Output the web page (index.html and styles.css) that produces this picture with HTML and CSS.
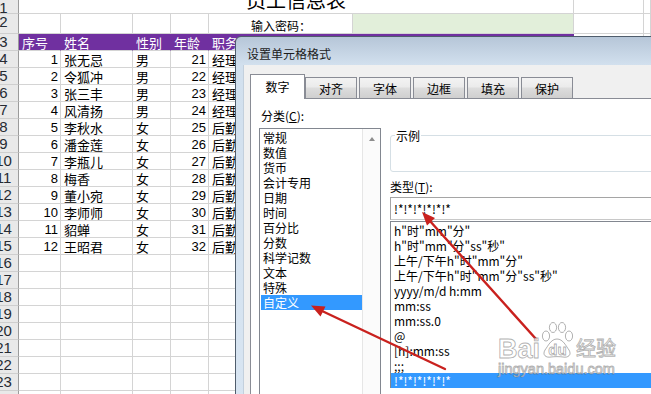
FILE: index.html
```html
<!DOCTYPE html>
<html lang="zh-CN">
<head>
  <meta charset="UTF-8" />
  <title>员工信息表 - 设置单元格格式</title>
  <link rel="stylesheet" href="styles.css">
</head>
<body>
  <div class="sheet">
    <div class="row r1">
      <div class="hd">1</div>
      <div class="cell title-cell"><span class="title">员工信息表</span></div>
      <div class="cell g"></div><div class="cell h"></div>
    </div>
    <div class="row r2">
      <div class="hd">2</div>
      <div class="cell a"></div><div class="cell b"></div><div class="cell c"></div><div class="cell d"></div>
      <div class="cell e pwd">输入密码：</div>
      <div class="cell f green"></div>
      <div class="cell g"></div><div class="cell h"></div>
    </div>
    <div class="row head">
      <div class="hd">3</div>
      <div class="cell a">序号</div><div class="cell b">姓名</div><div class="cell c">性别</div><div class="cell d">年龄</div>
      <div class="cell e">职务</div><div class="cell f"></div>
      <div class="cell g"></div><div class="cell h"></div>
    </div>
    <div class="row"><div class="hd">4</div><div class="cell a num">1</div><div class="cell b">张无忌</div><div class="cell c">男</div><div class="cell d num">21</div><div class="cell e">经理</div><div class="cell f"></div><div class="cell g"></div><div class="cell h"></div></div>
    <div class="row"><div class="hd">5</div><div class="cell a num">2</div><div class="cell b">令狐冲</div><div class="cell c">男</div><div class="cell d num">22</div><div class="cell e">经理</div><div class="cell f"></div><div class="cell g"></div><div class="cell h"></div></div>
    <div class="row"><div class="hd">6</div><div class="cell a num">3</div><div class="cell b">张三丰</div><div class="cell c">男</div><div class="cell d num">23</div><div class="cell e">经理</div><div class="cell f"></div><div class="cell g"></div><div class="cell h"></div></div>
    <div class="row"><div class="hd">7</div><div class="cell a num">4</div><div class="cell b">风清扬</div><div class="cell c">男</div><div class="cell d num">24</div><div class="cell e">经理</div><div class="cell f"></div><div class="cell g"></div><div class="cell h"></div></div>
    <div class="row"><div class="hd">8</div><div class="cell a num">5</div><div class="cell b">李秋水</div><div class="cell c">女</div><div class="cell d num">25</div><div class="cell e">后勤</div><div class="cell f"></div><div class="cell g"></div><div class="cell h"></div></div>
    <div class="row"><div class="hd">9</div><div class="cell a num">6</div><div class="cell b">潘金莲</div><div class="cell c">女</div><div class="cell d num">26</div><div class="cell e">后勤</div><div class="cell f"></div><div class="cell g"></div><div class="cell h"></div></div>
    <div class="row"><div class="hd">10</div><div class="cell a num">7</div><div class="cell b">李瓶儿</div><div class="cell c">女</div><div class="cell d num">27</div><div class="cell e">后勤</div><div class="cell f"></div><div class="cell g"></div><div class="cell h"></div></div>
    <div class="row"><div class="hd">11</div><div class="cell a num">8</div><div class="cell b">梅香</div><div class="cell c">女</div><div class="cell d num">28</div><div class="cell e">后勤</div><div class="cell f"></div><div class="cell g"></div><div class="cell h"></div></div>
    <div class="row"><div class="hd">12</div><div class="cell a num">9</div><div class="cell b">董小宛</div><div class="cell c">女</div><div class="cell d num">29</div><div class="cell e">后勤</div><div class="cell f"></div><div class="cell g"></div><div class="cell h"></div></div>
    <div class="row"><div class="hd">13</div><div class="cell a num">10</div><div class="cell b">李师师</div><div class="cell c">女</div><div class="cell d num">30</div><div class="cell e">后勤</div><div class="cell f"></div><div class="cell g"></div><div class="cell h"></div></div>
    <div class="row"><div class="hd">14</div><div class="cell a num">11</div><div class="cell b">貂蝉</div><div class="cell c">女</div><div class="cell d num">31</div><div class="cell e">后勤</div><div class="cell f"></div><div class="cell g"></div><div class="cell h"></div></div>
    <div class="row"><div class="hd">15</div><div class="cell a num">12</div><div class="cell b">王昭君</div><div class="cell c">女</div><div class="cell d num">32</div><div class="cell e">后勤</div><div class="cell f"></div><div class="cell g"></div><div class="cell h"></div></div>
    <div class="row"><div class="hd">16</div><div class="cell a"></div><div class="cell b"></div><div class="cell c"></div><div class="cell d"></div><div class="cell e"></div><div class="cell f"></div><div class="cell g"></div><div class="cell h"></div></div>
    <div class="row"><div class="hd">17</div><div class="cell a"></div><div class="cell b"></div><div class="cell c"></div><div class="cell d"></div><div class="cell e"></div><div class="cell f"></div><div class="cell g"></div><div class="cell h"></div></div>
    <div class="row"><div class="hd">18</div><div class="cell a"></div><div class="cell b"></div><div class="cell c"></div><div class="cell d"></div><div class="cell e"></div><div class="cell f"></div><div class="cell g"></div><div class="cell h"></div></div>
    <div class="row"><div class="hd">19</div><div class="cell a"></div><div class="cell b"></div><div class="cell c"></div><div class="cell d"></div><div class="cell e"></div><div class="cell f"></div><div class="cell g"></div><div class="cell h"></div></div>
    <div class="row"><div class="hd">20</div><div class="cell a"></div><div class="cell b"></div><div class="cell c"></div><div class="cell d"></div><div class="cell e"></div><div class="cell f"></div><div class="cell g"></div><div class="cell h"></div></div>
    <div class="row"><div class="hd">21</div><div class="cell a"></div><div class="cell b"></div><div class="cell c"></div><div class="cell d"></div><div class="cell e"></div><div class="cell f"></div><div class="cell g"></div><div class="cell h"></div></div>
    <div class="row"><div class="hd">22</div><div class="cell a"></div><div class="cell b"></div><div class="cell c"></div><div class="cell d"></div><div class="cell e"></div><div class="cell f"></div><div class="cell g"></div><div class="cell h"></div></div>
    <div class="row"><div class="hd">23</div><div class="cell a"></div><div class="cell b"></div><div class="cell c"></div><div class="cell d"></div><div class="cell e"></div><div class="cell f"></div><div class="cell g"></div><div class="cell h"></div></div>
    <div class="row"><div class="hd">24</div><div class="cell a"></div><div class="cell b"></div><div class="cell c"></div><div class="cell d"></div><div class="cell e"></div><div class="cell f"></div><div class="cell g"></div><div class="cell h"></div></div>
  </div>

  <div class="dialog">
    <div class="dlg-title">设置单元格格式</div>
    <div class="dlg-client">
      <div class="tabs">
        <div class="tab on">数字</div>
        <div class="tab">对齐</div>
        <div class="tab">字体</div>
        <div class="tab">边框</div>
        <div class="tab">填充</div>
        <div class="tab">保护</div>
      </div>
      <div class="panel">
        <div class="col-left">
          <div class="lbl">分类(<u>C</u>):</div>
          <div class="listbox">
            <ul class="items">
              <li>常规</li>
              <li>数值</li>
              <li>货币</li>
              <li>会计专用</li>
              <li>日期</li>
              <li>时间</li>
              <li>百分比</li>
              <li>分数</li>
              <li>科学记数</li>
              <li>文本</li>
              <li>特殊</li>
              <li class="sel">自定义</li>
            </ul>
            <div class="vscroll"><span class="up"></span></div>
          </div>
        </div>
        <div class="col-right">
          <div class="sample"><span class="legend">示例</span></div>
          <div class="lbl type-lbl">类型(<u>T</u>):</div>
          <div class="typein">!*!*!*!*!*!*</div>
          <ul class="typelist">
            <li>h"时"mm"分"</li>
            <li>h"时"mm"分"ss"秒"</li>
            <li>上午/下午h"时"mm"分"</li>
            <li>上午/下午h"时"mm"分"ss"秒"</li>
            <li>yyyy/m/d h:mm</li>
            <li>mm:ss</li>
            <li>mm:ss.0</li>
            <li>@</li>
            <li>[h]:mm:ss</li>
            <li>;;;</li>
            <li class="sel">!*!*!*!*!*!*</li>
          </ul>
        </div>
      </div>
    </div>
  </div>

  <svg class="marks" width="651" height="394" viewBox="0 0 651 394">
    <g stroke="#c9211e" stroke-width="2.4" stroke-linecap="round">
      <line x1="445" y1="369" x2="321" y2="310.5" />
      <line x1="536" y1="339" x2="429.5" y2="220.5" />
    </g>
    <g fill="#c9211e">
      <polygon points="311,305.5 325.5,306.5 320.5,316.5" />
      <polygon points="422,212 435,218 427,225.5" />
    </g>
  </svg>

  <div class="wm">
    <div class="wm-top">
      <span class="wm-bai">Bai</span>
      <svg class="paw" width="32" height="36" viewBox="0 0 32 36">
        <ellipse cx="5" cy="14" rx="3.6" ry="5" />
        <ellipse cx="12" cy="5.5" rx="3.6" ry="5" />
        <ellipse cx="21" cy="5.5" rx="3.6" ry="5" />
        <ellipse cx="28" cy="14" rx="3.6" ry="5" />
        <path d="M16 17 C10 17 7 24 4 28 C1 33 5 36 10 35 C13 34.5 19 34.5 22 35 C27 36 31 33 28 28 C25 24 22 17 16 17 Z" />
        <text x="16.5" y="33" text-anchor="middle">du</text>
      </svg>
      <span class="wm-jy">经验</span>
    </div>
    <div class="wm-url">jingyan.baidu.com</div>
  </div>
</body>
</html>
```

FILE: styles.css
```css
* {
  box-sizing: border-box;
}
html, body {
  margin: 0;
}
body {
  width: 651px;
  height: 394px;
  overflow: hidden;
  position: relative;
  background: #fff;
  font-family: "Noto Sans CJK SC", sans-serif;
  color: #000;
}

/* sheet */
.sheet {
  font-size: 13px;
}
.row {
  display: flex;
  height: 17px;
}
.row.r1 {
  height: 14px;
}
.row.r2 {
  height: 20px;
}
.hd {
  flex: none;
  width: 30px;
  margin-left: -11px;
  background: #e9e9e9;
  border-right: 1px solid #9b9b9b;
  border-bottom: 1px solid #cfcfcf;
  font-family: "Liberation Sans", sans-serif;
  font-size: 15px;
  line-height: 16px;
  text-align: center;
  color: #262b33;
}
.cell {
  flex: none;
  border-right: 1px solid #d4d4d4;
  border-bottom: 1px solid #d4d4d4;
  padding: 2px 2px 0 3px;
  line-height: 14px;
  white-space: nowrap;
  overflow: hidden;
}
.a { width: 42px; }
.b { width: 72px; }
.c { width: 38px; }
.d { width: 38px; }
.e { width: 144px; }
.f { width: 221px; }
.g { width: 70px; }
.h { flex: 1; }
.num {
  font-family: "Liberation Sans", sans-serif;
  text-align: right;
}
.title-cell {
  width: 555px;
  padding: 0;
}
.title {
  display: block;
  margin-top: -10px;
  text-align: center;
  font-size: 20px;
  line-height: 20px;
}
.pwd {
  padding-top: 5px;
  text-align: center;
  font-size: 12px;
}
.green {
  background: #e2efda;
}
.head .a, .head .b, .head .c, .head .d, .head .e, .head .f {
  background: #7030a0;
  border-right-color: #7030a0;
  color: #fff;
}

/* dialog */
.dialog {
  position: absolute;
  left: 235px;
  top: 36px;
  width: 440px;
  height: 380px;
  border: 1px solid #4f5d6c;
  border-radius: 6px 0 0 0;
  background: linear-gradient(#b6c6d8, #d2e0ee 28px, #d8e5f2);
  font-size: 12px;
  display: flex;
  flex-direction: column;
}
.dlg-title {
  height: 28px;
  padding: 5px 0 0 11px;
  line-height: 24px;
  color: #1c1c1c;
}
.dlg-client {
  flex: 1;
  margin-left: 7px;
  padding: 9px 0 0 6px;
  background: #f0f0f0;
  border-left: 1px solid #c3d0dd;
  display: flex;
  flex-direction: column;
}
.tabs {
  display: flex;
  align-items: flex-end;
  height: 24px;
}
.tab {
  width: 52px;
  height: 21px;
  margin-left: 2px;
  padding-top: 1px;
  line-height: 19px;
  text-align: center;
  border: 1px solid #898c95;
  border-bottom: none;
  background: linear-gradient(#f3f3f3, #ebebeb 45%, #dddddd 50%, #cfcfcf);
}
.tab.on {
  width: 55px;
  height: 25px;
  margin: 0 0 -1px 0;
  padding-top: 3px;
  line-height: 18px;
  background: #fff;
  position: relative;
  z-index: 1;
}
.tab.on + .tab {
  margin-left: 0;
}
.panel {
  flex: 1;
  display: flex;
  padding-left: 8px;
  background: #fff;
  border-top: 1px solid #898c95;
  border-left: 1px solid #898c95;
}
.lbl {
  padding: 9px 0 0 2px;
  line-height: 16px;
  height: 29px;
}
.col-left {
  width: 122px;
  flex: none;
}
.listbox {
  height: 280px;
  display: flex;
  border: 1px solid #828790;
}
ul {
  margin: 0;
  padding: 0;
  list-style: none;
}
.items {
  flex: 1;
  padding: 1px 0 0 1px;
}
.items li, .typelist li {
  height: 15px;
  line-height: 15px;
  padding-left: 2px;
  white-space: nowrap;
}
li.sel {
  background: #3399ff;
  color: #fff;
}
.vscroll {
  width: 18px;
  flex: none;
  padding-top: 8px;
  display: flex;
  justify-content: center;
  background: #fbfbfb;
  border-left: 1px solid #e6e6e6;
}
.up {
  width: 0;
  height: 0;
  border-left: 3.5px solid transparent;
  border-right: 3.5px solid transparent;
  border-bottom: 4px solid #8d8d8d;
}
.col-right {
  width: 320px;
  flex: none;
  margin-left: 9px;
  padding-top: 36px;
}
.sample {
  position: relative;
  height: 37px;
  border: 1px solid #d5dfe5;
  border-radius: 3px;
}
.legend {
  position: absolute;
  left: 4px;
  top: -7px;
  padding: 0 1px;
  line-height: 14px;
  background: #fff;
}
.type-lbl {
  height: auto;
  padding: 7px 0 0 0;
  margin-bottom: 2px;
}
.typein {
  height: 23px;
  padding-left: 3px;
  line-height: 21px;
  border: 1px solid #a5a5a5;
  border-bottom-color: #c8c8c8;
}
.typelist {
  margin-top: 1px;
  height: 167px;
  padding-top: 1px;
  border: 1px solid #828790;
}
.typelist li {
  padding-left: 3px;
}

/* overlays */
.marks {
  position: absolute;
  left: 0;
  top: 0;
  pointer-events: none;
}
.wm {
  position: absolute;
  left: 498px;
  top: 322px;
  color: rgba(255, 255, 255, 0.75);
  -webkit-text-stroke: 0.9px rgba(100, 100, 100, 0.5);
  pointer-events: none;
}
.wm-top {
  display: flex;
  align-items: flex-end;
  height: 40px;
}
.wm-bai {
  font-family: "Liberation Sans", sans-serif;
  font-weight: bold;
  font-size: 27px;
  line-height: 26px;
}
.paw {
  margin: 0 3px 4px 1px;
}
.paw ellipse, .paw path {
  fill: rgba(255, 255, 255, 0.65);
  stroke: rgba(100, 100, 100, 0.5);
  stroke-width: 1;
}
.paw text {
  font-family: "Liberation Sans", sans-serif;
  font-weight: bold;
  font-size: 15px;
  fill: rgba(255, 255, 255, 0.85);
  stroke: rgba(100, 100, 100, 0.55);
  stroke-width: 0.8;
}
.wm-jy {
  font-size: 20px;
  line-height: 20px;
  margin-bottom: 4px;
}
.wm-url {
  margin-top: -1px;
  font-family: "Liberation Sans", sans-serif;
  font-size: 14.5px;
  line-height: 16px;
}
```
